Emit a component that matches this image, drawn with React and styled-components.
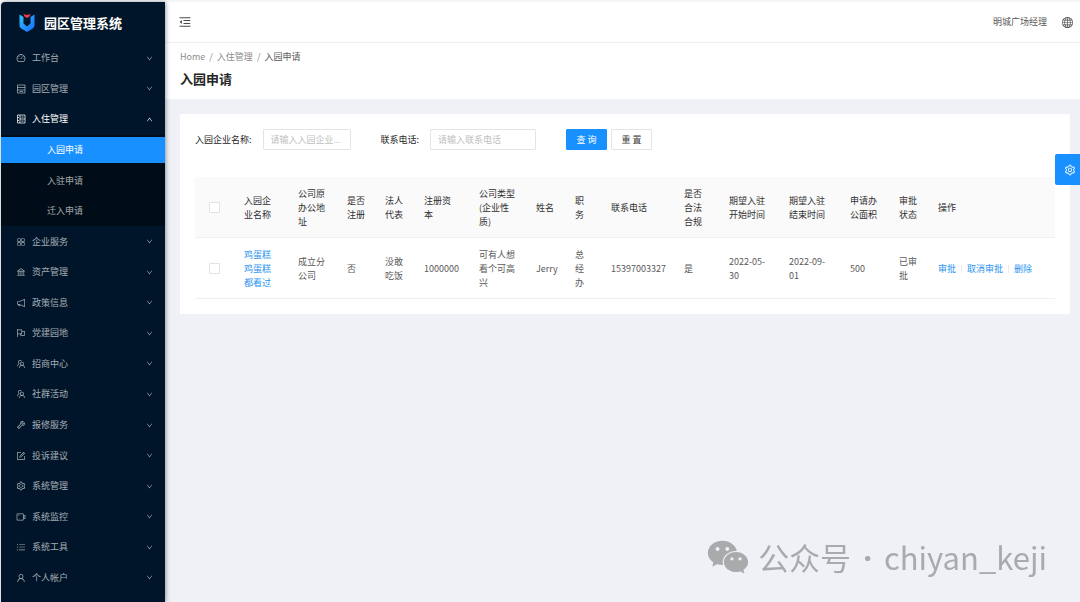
import React, { useState } from "react";
import styled, { createGlobalStyle } from "styled-components";
import {
  AiOutlineDashboard,
  AiOutlineAppstore,
  AiOutlineBank,
  AiOutlineNotification,
  AiOutlineFlag,
  AiOutlineTeam,
  AiOutlineTool,
  AiOutlineForm,
  AiOutlineSetting,
  AiOutlineVideoCamera,
  AiOutlineUnorderedList,
  AiOutlineUser,
  AiOutlineDown,
  AiOutlineUp,
  AiOutlineMenuFold,
  AiFillWechat,
} from "react-icons/ai";
import { BsGlobe } from "react-icons/bs";

function ParkIcon({ size }) {
  return (
    <svg width={size} height={size} viewBox="0 0 20 20" fill="none" stroke="currentColor" strokeWidth="1.500">
      <path d="M3 2 H18 V18 H3 Z M3 7 H18 M3 12 H18" />
      <path d="M7 15 H14" />
    </svg>
  );
}

function CheckInIcon({ size }) {
  return (
    <svg width={size} height={size} viewBox="0 0 20 20" fill="none" stroke="currentColor" strokeWidth="1.500">
      <path d="M3 2 H18 V18 H3 Z M8 2 V18 M8 10 H18" />
      <path d="M3 7 H6 M3 13 H6 M11 6 H15 M11 14 H15" />
    </svg>
  );
}

const menu = [
  { name: "工作台", icon: AiOutlineDashboard },
  { name: "园区管理", icon: ParkIcon },
  {
    name: "入住管理",
    icon: CheckInIcon,
    children: ["入园申请", "入驻申请", "迁入申请"],
  },
  { name: "企业服务", icon: AiOutlineAppstore },
  { name: "资产管理", icon: AiOutlineBank },
  { name: "政策信息", icon: AiOutlineNotification },
  { name: "党建园地", icon: AiOutlineFlag },
  { name: "招商中心", icon: AiOutlineTeam },
  { name: "社群活动", icon: AiOutlineTeam },
  { name: "报修服务", icon: AiOutlineTool },
  { name: "投诉建议", icon: AiOutlineForm },
  { name: "系统管理", icon: AiOutlineSetting },
  { name: "系统监控", icon: AiOutlineVideoCamera },
  { name: "系统工具", icon: AiOutlineUnorderedList },
  { name: "个人帐户", icon: AiOutlineUser },
];

const columns = [
  { title: "入园企业名称", key: "company", width: 54 },
  { title: "公司原办公地址", key: "address", width: 49 },
  { title: "是否注册", key: "registered", width: 38 },
  { title: "法人代表", key: "legal", width: 39 },
  { title: "注册资本", key: "capital", width: 55 },
  { title: "公司类型(企业性质)", key: "type", width: 57 },
  { title: "姓名", key: "name", width: 39 },
  { title: "职务", key: "job", width: 36 },
  { title: "联系电话", key: "phone", width: 73 },
  { title: "是否合法合规", key: "legalOk", width: 45 },
  { title: "期望入驻开始时间", key: "start", width: 60 },
  { title: "期望入驻结束时间", key: "end", width: 61 },
  { title: "申请办公面积", key: "area", width: 49 },
  { title: "审批状态", key: "status", width: 39 },
];

const rows = [
  {
    id: 1,
    company: "鸡蛋糕鸡蛋糕都看过",
    address: "成立分公司",
    registered: "否",
    legal: "没敢吃饭",
    capital: "1000000",
    type: "可有人想看个可高兴",
    name: "Jerry",
    job: "总经办",
    phone: "15397003327",
    legalOk: "是",
    start: "2022-05-30",
    end: "2022-09-01",
    area: "500",
    status: "已审批",
  },
];

function Logo() {
  return (
    <svg width="16" height="19" viewBox="0 0 16 19">
      <defs>
        <linearGradient id="logo-blue" x1="0" y1="0" x2="1" y2="1">
          <stop offset="0" stopColor="#2fc4fb" />
          <stop offset="1" stopColor="#1668ff" />
        </linearGradient>
      </defs>
      <path
        d="M0.500 1.500 L4.500 4 V10.500 L8 13.500 L11.500 10.500 V4 L15.500 1.500 V12.500 C15.500 14 14.500 15 13 16 L8 19 L3 16 C1.500 15 0.500 14 0.500 12.500 Z"
        fill="url(#logo-blue)"
      />
      <path d="M4.500 1 L8 2 L11.500 1 L10.500 3.500 L8 5 L5.500 3.500 Z" fill="#f0394d" />
    </svg>
  );
}

function SideMenu() {
  const [open, setOpen] = useState("入住管理");
  const [active, setActive] = useState("入园申请");

  return (
    <Menu>
      {menu.map(({ name, icon: Icon, children }) => {
        const isOpen = open === name;
        return (
          <React.Fragment key={name}>
            <MenuItem>
              <MenuButton $open={isOpen} onClick={() => setOpen(isOpen ? "" : name)}>
                <Icon size={10} />
                <span>{name}</span>
                {isOpen ? <AiOutlineUp size={7} /> : <AiOutlineDown size={7} />}
              </MenuButton>
            </MenuItem>
            {isOpen &&
              children?.map((child) => (
                <SubItem key={child}>
                  <SubLink
                    href="#"
                    $active={active === child}
                    onClick={() => setActive(child)}
                  >
                    {child}
                  </SubLink>
                </SubItem>
              ))}
          </React.Fragment>
        );
      })}
    </Menu>
  );
}

function SearchForm() {
  return (
    <Form onSubmit={(e) => e.preventDefault()}>
      <Field>
        <label htmlFor="company">入园企业名称:</label>
        <TextInput id="company" $width="88px" placeholder="请输入入园企业名称" />
      </Field>
      <Field>
        <label htmlFor="phone">联系电话:</label>
        <TextInput id="phone" $width="106px" placeholder="请输入联系电话" />
      </Field>
      <Buttons>
        <Button type="submit" $primary>查 询</Button>
        <Button type="reset">重 置</Button>
      </Buttons>
    </Form>
  );
}

function ApplyTable() {
  return (
    <Table>
      <colgroup>
        <Col $width={39} />
        {columns.map((c) => (
          <Col key={c.key} $width={c.width} />
        ))}
        <col />
      </colgroup>
      <thead>
        <tr>
          <th>
            <Checkbox aria-label="全选" />
          </th>
          {columns.map((c) => (
            <th key={c.key}>{c.title}</th>
          ))}
          <th>操作</th>
        </tr>
      </thead>
      <tbody>
        {rows.map((row) => (
          <tr key={row.id}>
            <td>
              <Checkbox aria-label={row.company} />
            </td>
            {columns.map((c) => (
              <td key={c.key}>
                {c.key === "company" ? <Link href="#">{row.company}</Link> : row[c.key]}
              </td>
            ))}
            <td>
              <Actions>
                <Link href="#">审批</Link>
                <Divider />
                <Link href="#">取消审批</Link>
                <Divider />
                <Link href="#">删除</Link>
              </Actions>
            </td>
          </tr>
        ))}
      </tbody>
    </Table>
  );
}

export default function App() {
  return (
    <Layout>
      <GlobalStyle />
      <Sider>
        <Brand>
          <Logo />
          <h1>园区管理系统</h1>
        </Brand>
        <SideMenu />
      </Sider>
      <Main>
        <Header>
          <IconButton aria-label="收起菜单">
            <AiOutlineMenuFold size={14} />
          </IconButton>
          <User>明城广场经理</User>
          <IconButton aria-label="语言">
            <BsGlobe size={11} />
          </IconButton>
        </Header>
        <PageHead>
          <Breadcrumb>
            <a href="#">Home</a>
            <span>/</span>
            <a href="#">入住管理</a>
            <span>/</span>
            <b>入园申请</b>
          </Breadcrumb>
          <h2>入园申请</h2>
        </PageHead>
        <Card>
          <SearchForm />
          <ApplyTable />
        </Card>
      </Main>
      <SettingTab aria-label="设置">
        <AiOutlineSetting size={12} />
      </SettingTab>
      <Watermark>
        <AiFillWechat size={46} />
        <WatermarkText>
          <span>公众号</span>
          <Dot>·</Dot>
          <span>chiyan_keji</span>
        </WatermarkText>
      </Watermark>
    </Layout>
  );
}

const GlobalStyle = createGlobalStyle`
  * {
    box-sizing: border-box;
  }
  body {
    margin: 0;
    background: #f5f5f5;
    color: #595959;
    font-family: "Noto Sans CJK SC", sans-serif;
    font-size: 9px;
    line-height: 14px;
  }
  button, input {
    font: inherit;
  }
  a {
    text-decoration: none;
  }
`;

const Layout = styled.div`
  display: flex;
  min-height: 100vh;
  padding: 2px 0 0 1px;
`;

const Sider = styled.aside`
  display: flex;
  flex-direction: column;
  width: 164px;
  flex-shrink: 0;
  background: #001529;
  border-top-left-radius: 4px;
  box-shadow: 1px 0 4px rgba(0, 21, 41, 0.4);
  z-index: 1;
`;

const Brand = styled.div`
  display: flex;
  align-items: center;
  gap: 9px;
  height: 41px;
  padding-left: 18px;

  h1 {
    margin: 0;
    color: #fff;
    font-size: 13px;
    font-weight: 700;
    line-height: 20px;
  }
`;

const Menu = styled.ul`
  display: flex;
  flex: 1;
  flex-direction: column;
  margin: 0;
  padding: 0 0 9px;
  list-style: none;
`;

const MenuItem = styled.li`
  display: flex;
  flex: 1;
  max-height: 31px;
`;

const MenuButton = styled.button`
  display: flex;
  align-items: center;
  gap: 6px;
  width: 100%;
  padding: 0 12px 0 15px;
  border: 0;
  background: none;
  color: ${(p) => (p.$open ? "#fff" : "rgba(255, 255, 255, 0.65)")};
  cursor: pointer;

  span {
    flex: 1;
    text-align: left;
  }
`;

const SubItem = styled.li`
  display: flex;
  flex: 1;
  align-items: center;
  max-height: 31px;
  background: #000c17;
`;

const SubLink = styled.a`
  flex: 1;
  padding: 0 0 0 46px;
  line-height: 26px;
  color: ${(p) => (p.$active ? "#fff" : "rgba(255, 255, 255, 0.65)")};
  background: ${(p) => (p.$active ? "#1890ff" : "none")};
`;

const Main = styled.main`
  flex: 1;
  min-width: 0;
  background: #eff1f6;
`;

const Header = styled.header`
  display: flex;
  align-items: center;
  gap: 15px;
  height: 41px;
  padding: 0 7px 0 13px;
  background: #fff;
  border-bottom: 1px solid #f0f0f0;
`;

const IconButton = styled.button`
  display: flex;
  padding: 0;
  border: 0;
  background: none;
  color: #4a4a4a;
  cursor: pointer;
`;

const User = styled.span`
  margin-left: auto;
`;

const PageHead = styled.section`
  padding: 7px 15px 11px;
  background: #fff;

  h2 {
    margin: 5px 0 0;
    color: #262626;
    font-size: 13px;
    font-weight: 700;
    line-height: 19px;
  }
`;

const Breadcrumb = styled.nav`
  display: flex;
  gap: 4px;
  color: #8c8c8c;

  a {
    color: #8c8c8c;
  }
  b {
    color: #595959;
    font-weight: 400;
  }
`;

const Card = styled.section`
  margin: 15px 10px 15px 15px;
  padding: 15px;
  background: #fff;
`;

const Form = styled.form`
  display: flex;
  align-items: center;
  margin-bottom: 27px;
`;

const Field = styled.div`
  display: flex;
  align-items: center;
  gap: 11px;
  margin-right: 30px;
  color: #262626;
`;

const TextInput = styled.input`
  width: ${(p) => p.$width};
  height: 21px;
  padding: 0 4px 0 7px;
  border: 1px solid #e4e4e4;
  border-radius: 1px;
  outline: none;
  font-family: "Open Sans", "Noto Sans CJK SC", sans-serif;
  text-overflow: ellipsis;

  &::placeholder {
    color: #bfbfbf;
  }
`;

const Buttons = styled.div`
  display: flex;
  gap: 4px;
`;

const Button = styled.button`
  width: 41px;
  height: 21px;
  padding: 0;
  border: 1px solid ${(p) => (p.$primary ? "#1890ff" : "#e4e4e4")};
  border-radius: 1px;
  background: ${(p) => (p.$primary ? "#1890ff" : "#fff")};
  color: ${(p) => (p.$primary ? "#fff" : "#404040")};
  cursor: pointer;
`;

const Table = styled.table`
  width: 100%;
  table-layout: fixed;
  border-collapse: separate;
  border-spacing: 0;

  th, td {
    height: 61px;
    padding: 10px 10px 8px;
    border-bottom: 1px solid #f0f0f0;
    text-align: left;
    vertical-align: middle;
    font-weight: 400;
  }
  th {
    color: #303030;
    background: #fafafa;
  }
  th:first-child, td:first-child {
    padding: 0;
    text-align: center;
  }
`;

const Col = styled.col`
  width: ${(p) => p.$width}px;
`;

const Checkbox = styled.input.attrs({ type: "checkbox" })`
  appearance: none;
  display: block;
  width: 11px;
  height: 11px;
  margin: 0 auto;
  border: 1px solid #e2e2e2;
  border-radius: 1px;
  background: #fff;

  &:checked {
    background: #1890ff;
  }
`;

const Link = styled.a`
  color: #2a93f0;
`;

const Actions = styled.div`
  display: flex;
  align-items: center;
  gap: 5px;
  white-space: nowrap;
`;

const Divider = styled.span`
  width: 1px;
  height: 8px;
  background: #ececec;
`;

const SettingTab = styled.button`
  position: fixed;
  top: 154px;
  right: 0;
  display: flex;
  align-items: center;
  justify-content: flex-end;
  width: 25px;
  height: 31px;
  padding: 0 4px;
  border: 0;
  border-radius: 2px 0 0 2px;
  background: #1890ff;
  color: #fff;
  cursor: pointer;
`;

const Watermark = styled.div`
  position: fixed;
  right: 33px;
  bottom: 22px;
  display: flex;
  align-items: center;
  gap: 7px;
  color: #a9aaac;
`;

const WatermarkText = styled.div`
  display: flex;
  gap: 12px;
  font-size: 31px;
  line-height: 46px;
`;

const Dot = styled.span`
  font-family: "Open Sans", sans-serif;
  font-weight: 700;
`;
